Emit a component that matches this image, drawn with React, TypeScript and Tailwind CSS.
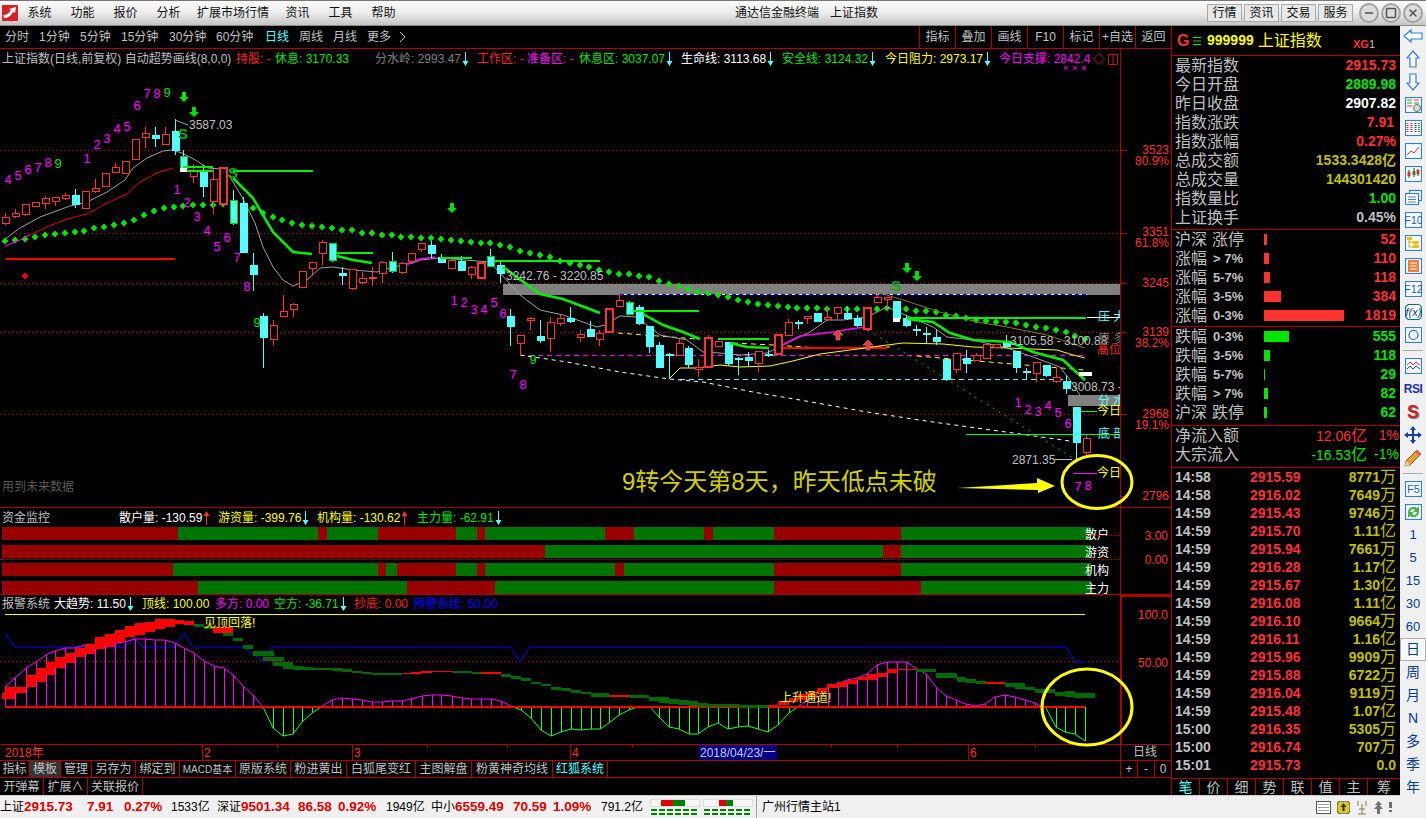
import { Minus, Square, X } from 'lucide-react';
import type { ReactNode } from 'react';

const pts = (a: number[][]) => a.map((p) => p.join(',')).join(' ');

const RED = '#ff3232';
const CYAN = '#54ffff';
const GREEN = '#00e600';
const MAG = '#ff00ff';
const YEL = '#ffff00';

// x, wick top, body top, body bottom, wick bottom, kind
type Candle = [number, number, number, number, number, 'u' | 'd' | 'g'];
const candles: Candle[] = [
    [5, 213, 217, 223, 225, 'u'], [15, 209, 213, 216, 218, 'u'], [25, 204, 204, 214, 216, 'u'], [35, 202, 202, 206, 206, 'u'],
    [45, 196, 198, 203, 209, 'u'], [55, 197, 197, 201, 206, 'u'], [65, 193, 195, 198, 200, 'u'], [75, 189, 195, 204, 208, 'd'],
    [85, 191, 191, 208, 208, 'u'], [95, 179, 188, 191, 193, 'u'], [105, 173, 173, 186, 186, 'u'], [115, 163, 167, 172, 173, 'u'],
    [125, 161, 161, 173, 173, 'u'], [135, 139, 139, 159, 159, 'u'], [145, 127, 133, 137, 148, 'u'], [155, 127, 135, 138, 147, 'd'],
    [165, 127, 134, 144, 145, 'u'], [175, 119, 131, 150, 155, 'd'], [183, 150, 156, 168, 170, 'g'], [193, 164, 170, 176, 183, 'u'],
    [203, 165, 172, 186, 197, 'd'], [213, 169, 179, 201, 214, 'u'], [223, 167, 167, 203, 205, 'u'], [233, 190, 200, 223, 225, 'g'],
    [243, 197, 203, 252, 253, 'd'], [253, 253, 265, 274, 291, 'd'], [263, 313, 316, 337, 368, 'd'], [273, 320, 325, 339, 345, 'u'],
    [283, 295, 311, 316, 316, 'u'], [293, 303, 304, 309, 317, 'u'], [302, 271, 271, 287, 287, 'u'], [312, 262, 262, 268, 276, 'u'],
    [322, 240, 242, 253, 265, 'u'], [332, 243, 243, 260, 262, 'g'], [342, 267, 273, 275, 285, 'd'], [352, 269, 269, 288, 290, 'u'],
    [362, 272, 278, 282, 284, 'u'], [372, 267, 277, 278, 286, 'u'], [382, 261, 262, 273, 283, 'u'], [392, 252, 261, 271, 273, 'g'],
    [402, 262, 263, 272, 274, 'u'], [411, 253, 253, 261, 261, 'u'], [421, 243, 243, 249, 252, 'u'], [431, 241, 245, 253, 258, 'd'],
    [441, 254, 257, 262, 262, 'd'], [451, 258, 260, 268, 268, 'u'], [461, 256, 261, 270, 270, 'd'], [471, 266, 267, 274, 279, 'u'],
    [481, 262, 262, 277, 277, 'u'], [490, 249, 256, 266, 266, 'g'], [500, 262, 265, 273, 283, 'd'], [510, 309, 316, 326, 346, 'd'],
    [520, 335, 335, 343, 356, 'u'], [530, 317, 318, 320, 330, 'u'], [540, 320, 336, 340, 343, 'd'], [550, 317, 322, 338, 352, 'u'],
    [560, 315, 318, 323, 326, 'u'], [570, 307, 318, 321, 323, 'd'], [580, 330, 334, 337, 342, 'u'], [590, 321, 329, 336, 337, 'd'],
    [599, 330, 333, 339, 346, 'u'], [609, 308, 308, 331, 331, 'u'], [619, 294, 300, 306, 306, 'u'], [629, 301, 302, 314, 314, 'g'],
    [639, 305, 307, 323, 325, 'd'], [649, 326, 326, 346, 353, 'd'], [659, 342, 345, 367, 368, 'd'], [669, 353, 354, 355, 379, 'd'],
    [679, 339, 343, 355, 356, 'u'], [688, 346, 348, 364, 368, 'd'], [698, 359, 367, 369, 377, 'u'], [708, 335, 337, 366, 366, 'u'],
    [718, 341, 341, 346, 346, 'u'], [728, 342, 342, 363, 366, 'd'], [738, 357, 358, 359, 375, 'd'], [748, 352, 357, 360, 367, 'd'],
    [758, 351, 351, 363, 372, 'u'], [768, 350, 354, 355, 357, 'd'], [778, 334, 334, 353, 353, 'u'], [788, 319, 322, 335, 335, 'u'],
    [798, 320, 322, 323, 329, 'd'], [807, 316, 316, 318, 324, 'u'], [817, 313, 313, 321, 321, 'd'], [827, 307, 317, 319, 321, 'u'],
    [837, 307, 307, 313, 320, 'u'], [847, 307, 313, 318, 320, 'd'], [857, 315, 318, 325, 327, 'd'], [867, 307, 307, 328, 331, 'u'],
    [877, 292, 297, 302, 302, 'u'], [887, 297, 297, 299, 307, 'u'], [896, 301, 301, 318, 318, 'd'], [906, 315, 318, 325, 327, 'd'],
    [916, 325, 329, 330, 336, 'd'], [926, 327, 333, 334, 343, 'd'], [936, 330, 337, 341, 345, 'd'], [946, 359, 359, 379, 381, 'd'],
    [956, 353, 353, 369, 373, 'u'], [966, 350, 358, 363, 373, 'd'], [976, 353, 355, 360, 361, 'u'], [986, 344, 344, 358, 359, 'u'],
    [996, 344, 344, 347, 347, 'u'], [1006, 335, 341, 346, 346, 'd'], [1016, 351, 351, 367, 373, 'd'], [1026, 368, 371, 372, 380, 'd'],
    [1036, 362, 362, 373, 382, 'u'], [1046, 365, 365, 375, 377, 'd'], [1056, 367, 377, 381, 383, 'u'], [1066, 375, 381, 388, 394, 'd'],
    [1076, 407, 407, 442, 459, 'd'], [1086, 435, 438, 452, 457, 'u'],
];
// the big red bodies are drawn with a heavier outline
const heavyCandles = [223, 481, 609, 708, 778, 867];

const dots = [
    [5, 241], [15, 240], [25, 239], [35, 237], [45, 235], [55, 234], [65, 233], [75, 232], [84, 231], [94, 228], [104, 227], [114, 225],
    [124, 223], [134, 220], [144, 215], [154, 211], [164, 208], [174, 207], [183, 206], [193, 205], [203, 205], [213, 205], [223, 204],
    [253, 208], [263, 213], [273, 217], [282, 220], [292, 223], [302, 225], [312, 226], [322, 227], [332, 228], [342, 230], [352, 230],
    [362, 233], [372, 233], [382, 235], [392, 235], [401, 237], [411, 237], [421, 238], [431, 238], [441, 239], [451, 240], [461, 241],
    [471, 242], [481, 243], [490, 243], [500, 245], [510, 247], [520, 251], [530, 253], [540, 255], [550, 257], [560, 261], [570, 263],
    [580, 265], [589, 267], [599, 270], [609, 272], [619, 274], [629, 274], [639, 276], [649, 277], [659, 281], [669, 284], [679, 286],
    [688, 289], [698, 292], [708, 293], [718, 295], [728, 297], [738, 300], [748, 302], [758, 304], [768, 305], [778, 306], [788, 307],
    [797, 308], [807, 308], [817, 308], [827, 309], [847, 309], [857, 309], [877, 309], [887, 308], [906, 309], [916, 311], [926, 311],
    [936, 312], [946, 315], [956, 316], [966, 318], [976, 320], [986, 321], [996, 322], [1006, 322], [1016, 323], [1026, 325], [1036, 327],
    [1046, 328], [1056, 330], [1066, 332], [1075, 336], [1085, 339],
];

const grayLine = [
    [5, 239], [20, 228], [40, 217], [70, 206], [87, 202], [107, 192], [125, 180], [133, 168], [147, 158], [163, 151], [172, 150], [182, 153],
    [197, 161], [208, 168], [220, 169], [230, 177], [242, 197], [255, 223], [263, 247], [273, 267], [283, 280], [293, 286], [307, 280],
    [320, 268], [333, 267], [353, 270], [377, 272], [393, 267], [413, 263], [420, 260], [440, 258], [490, 262], [500, 273], [520, 295],
    [540, 310], [563, 315], [597, 327], [605, 325], [620, 316], [637, 317], [647, 325], [660, 335], [687, 340], [703, 352], [720, 353],
    [740, 355], [767, 353], [787, 343], [810, 332], [827, 320], [843, 320], [867, 317], [887, 307], [933, 327], [947, 337], [973, 340],
    [1007, 348], [1033, 357], [1060, 367], [1070, 380], [1080, 395],
];
const redLine = [[30, 235], [47, 227], [67, 219], [87, 214], [107, 203], [127, 194], [140, 182], [157, 173], [173, 168]];
const yellowLine = [
    [669, 379], [680, 368], [697, 368], [720, 365], [740, 367], [770, 366], [793, 361], [820, 354], [850, 350], [887, 345], [903, 343],
    [943, 344], [973, 347], [1007, 348], [1057, 350], [1073, 355], [1085, 358],
];
const oliveLine = [[880, 293], [903, 300], [940, 312], [977, 322], [1007, 327], [1047, 335], [1085, 348]];
const trendLine = [
    [520, 355], [567, 362], [620, 372], [669, 379], [703, 382], [753, 392], [800, 400], [867, 412], [933, 422], [1013, 433], [1077, 442],
];
const greenThick = [
    [[233, 178], [253, 198], [273, 232], [293, 252], [312, 254]],
    [[337, 256], [353, 260], [372, 263]],
    [[503, 267], [540, 294], [563, 299], [587, 308], [600, 313]],
    [[643, 314], [663, 325], [683, 332], [700, 339]],
    [[730, 343], [747, 347], [769, 348]],
    [[907, 319], [933, 322], [950, 333], [973, 340], [1010, 342], [1033, 352], [1063, 360], [1085, 380]],
];
const greenFlat = [
    [183, 213, 167], [183, 213, 171], [233, 313, 171], [337, 373, 253], [440, 472, 258], [495, 600, 261],
    [633, 699, 311], [718, 769, 339], [907, 1086, 318],
];

// x, y, text, colour
const nines: [number, number, string, string][] = [
    [8, 179, '4', MAG], [18, 175, '5', MAG], [28, 169, '6', MAG], [38, 167, '7', MAG], [48, 162, '8', MAG], [58, 163, '9', GREEN],
    [87, 158, '1', MAG], [97, 144, '2', MAG], [107, 138, '3', MAG], [117, 128, '4', MAG], [127, 126, '5', MAG], [137, 105, '6', MAG],
    [147, 93, '7', MAG], [157, 93, '8', MAG], [167, 92, '9', GREEN], [177, 189, '1', MAG], [187, 202, '2', MAG], [197, 216, '3', MAG],
    [207, 230, '4', MAG], [217, 246, '5', MAG], [227, 237, '6', MAG], [237, 257, '7', MAG], [247, 286, '8', MAG], [257, 322, '9', GREEN],
    [454, 300, '1', MAG], [464, 302, '2', MAG], [474, 309, '3', MAG], [484, 309, '4', MAG], [494, 302, '5', MAG], [503, 313, '6', MAG],
    [513, 374, '7', MAG], [523, 384, '8', MAG], [533, 359, '9', GREEN], [1018, 402, '1', MAG], [1028, 409, '2', MAG], [1038, 411, '3', MAG],
    [1048, 405, '4', MAG], [1058, 412, '5', MAG], [1068, 423, '6', MAG], [1078, 486, '7', MAG], [1088, 485, '8', MAG],
];

const downArrows = [[184, 97], [194, 112], [452, 208], [907, 268], [917, 276]];
const upArrows = [[838, 335], [868, 345]];

const moneyBars: [number, string][][] = [
    [[178, 'r'], [318, 'g'], [327, 'r'], [378, 'g'], [456, 'r'], [477, 'g'], [485, 'r'], [605, 'g'], [634, 'r'], [704, 'g'], [713, 'r'], [774, 'g'], [901, 'r'], [1091, 'g']],
    [[545, 'r'], [883, 'g'], [901, 'r'], [1091, 'g']],
    [[173, 'r'], [378, 'g'], [386, 'r'], [397, 'g'], [456, 'r'], [477, 'g'], [485, 'r'], [615, 'g'], [624, 'r'], [774, 'g'], [901, 'r'], [1091, 'g']],
    [[198, 'r'], [407, 'g'], [495, 'r'], [774, 'g'], [921, 'r'], [1091, 'g']],
];
const moneyLabels = ['散户', '游资', '机构', '主力'];

// x1, x2, y1, y2, colour key
const band: [number, number, number, number, string][] = [
    [2, 15, 693, 699, 'r'], [5, 15, 687, 699, 'r'], [15, 26, 687, 693, 'r'], [26, 36, 675, 687, 'r'], [36, 46, 668, 682, 'r'], [46, 55, 662, 675, 'r'],
    [55, 65, 657, 668, 'r'], [65, 75, 653, 663, 'r'], [75, 85, 648, 657, 'r'], [85, 95, 644, 654, 'r'], [95, 105, 637, 649, 'r'], [105, 115, 634, 647, 'r'],
    [115, 125, 630, 642, 'r'], [125, 135, 626, 637, 'r'], [135, 145, 623, 635, 'r'], [145, 155, 622, 632, 'r'], [155, 165, 619, 629, 'r'], [165, 175, 619, 627, 'r'],
    [175, 184, 620, 624, 'r'], [184, 194, 621, 625, 'r'], [194, 204, 624, 627, 'g'], [204, 214, 626, 629, 'g'], [213, 233, 627, 633, 'r'], [223, 233, 633, 636, 'g'],
    [233, 243, 638, 641, 'g'], [243, 253, 645, 649, 'g'], [253, 274, 651, 656, 'g'], [263, 284, 657, 661, 'g'], [273, 293, 662, 666, 'g'], [283, 303, 666, 669, 'g'],
    [293, 313, 667, 670, 'g'], [313, 332, 668, 670, 'g'], [332, 342, 668, 671, 'g'], [342, 352, 669, 672, 'g'], [352, 362, 671, 673, 'g'], [362, 372, 672, 674, 'g'],
    [372, 382, 673, 675, 'g'], [382, 402, 673, 675, 'g'], [402, 411, 673, 674, 'r'], [411, 421, 672, 674, 'r'], [421, 432, 671, 673, 'r'], [432, 452, 671, 672, 'r'],
    [452, 472, 671, 673, 'g'], [472, 481, 672, 674, 'g'], [481, 501, 672, 674, 'r'], [501, 511, 674, 677, 'g'], [511, 521, 676, 679, 'g'], [521, 531, 678, 681, 'g'],
    [531, 541, 682, 684, 'g'], [541, 551, 684, 686, 'g'], [551, 561, 687, 690, 'g'], [561, 571, 688, 691, 'g'], [571, 581, 690, 693, 'g'], [581, 591, 692, 694, 'g'],
    [591, 609, 693, 697, 'g'], [609, 630, 695, 697, 'r'], [630, 649, 695, 698, 'g'], [649, 659, 697, 701, 'g'], [659, 669, 697, 703, 'g'], [669, 679, 699, 704, 'g'],
    [679, 689, 700, 705, 'g'], [689, 698, 701, 706, 'g'], [698, 708, 703, 707, 'g'], [708, 739, 704, 707, 'g'], [739, 768, 705, 708, 'g'], [768, 778, 705, 707, 'r'],
    [778, 789, 701, 705, 'r'], [789, 798, 698, 702, 'r'], [798, 807, 694, 700, 'r'], [807, 817, 692, 697, 'r'], [817, 827, 688, 692, 'r'], [827, 837, 684, 688, 'r'],
    [837, 847, 682, 687, 'r'], [847, 857, 680, 684, 'r'], [857, 867, 677, 680, 'r'], [867, 877, 674, 680, 'r'], [877, 887, 673, 677, 'r'], [887, 898, 669, 673, 'r'],
    [898, 916, 669, 670, 'r'], [916, 936, 669, 672, 'g'], [936, 957, 673, 678, 'g'], [957, 966, 677, 682, 'g'], [966, 976, 679, 683, 'g'], [976, 986, 681, 684, 'g'],
    [986, 1005, 682, 684, 'r'], [1005, 1015, 683, 687, 'g'], [1015, 1025, 683, 689, 'g'], [1025, 1035, 687, 690, 'g'], [1035, 1055, 689, 693, 'g'], [1055, 1065, 692, 696, 'g'],
    [1065, 1075, 691, 697, 'g'], [1075, 1095, 693, 698, 'g'],
];

const magUp = [
    [[5, 687], [15, 678], [26, 668], [36, 662], [46, 655], [55, 651], [65, 648], [75, 648], [85, 645], [95, 644], [105, 644], [115, 643], [125, 642], [135, 639], [145, 639], [155, 640], [165, 640], [175, 643], [184, 648], [194, 653], [204, 661], [214, 666], [224, 668], [233, 675], [243, 686], [253, 695], [263, 707]],
    [[321, 707], [332, 700], [342, 698], [352, 699], [362, 700], [372, 702], [382, 702], [392, 701], [402, 701], [411, 699], [422, 696], [432, 695], [441, 695], [452, 696], [462, 698], [471, 699], [481, 699], [491, 699], [501, 701], [511, 706]],
    [[798, 707], [807, 700], [818, 697], [828, 688], [838, 684], [847, 680], [857, 678], [867, 674], [877, 665], [887, 662], [897, 662], [906, 662], [916, 668], [926, 674], [936, 687], [946, 696], [956, 700], [966, 704], [976, 706], [985, 704], [995, 697], [1005, 695], [1015, 697], [1025, 700], [1035, 703], [1042, 707]],
];
const greenDown = [
    [[263, 707], [273, 728], [283, 736], [293, 734], [302, 722], [312, 713], [321, 707]],
    [[513, 707], [521, 710], [531, 718], [541, 730], [551, 736], [561, 732], [571, 729], [581, 730], [591, 729], [600, 729], [609, 723], [619, 715], [629, 710], [637, 707]],
    [[650, 707], [659, 717], [669, 727], [679, 729], [689, 734], [698, 734], [708, 727], [718, 723], [728, 729], [738, 727], [748, 726], [758, 729], [768, 732], [778, 725], [789, 713], [798, 707]],
    [[1046, 708], [1056, 727], [1065, 732], [1075, 734], [1085, 741]],
];
const blueLine = [
    [5, 633], [15, 647], [124, 647], [134, 638], [143, 647], [174, 647], [184, 633], [193, 647], [243, 647], [264, 662], [272, 647], [511, 647],
    [520, 662], [530, 647], [1066, 647], [1075, 662], [1085, 662],
];

const periods: [string, string][] = [
    ['分时', 'w-[34px]'], ['1分钟', 'w-[41px]'], ['5分钟', 'w-[41px]'], ['15分钟', 'w-[48px]'], ['30分钟', 'w-[47px]'],
    ['60分钟', 'w-[49px]'], ['日线', 'w-[34px] text-[#54ffff]'], ['周线', 'w-[34px]'], ['月线', 'w-[34px]'], ['更多', 'w-[32px]'],
];
const menu: [string, string][] = [
    ['系统', 'px-[9.5px]'], ['功能', 'px-[9.5px]'], ['报价', 'px-[9.5px]'], ['分析', 'px-[9.5px]'], ['扩展市场行情', 'px-[7px]'],
    ['资讯', 'px-[9.5px]'], ['工具', 'px-[9.5px]'], ['帮助', 'px-[9.5px]'],
];
const chartButtons = ['指标', '叠加', '画线', 'F10', '标记', '+自选', '返回'];

const quote: [string, string, string][] = [
    ['最新指数', '2915.73', 'text-[#ff3232]'], ['今日开盘', '2889.98', 'text-[#00e600]'], ['昨日收盘', '2907.82', 'text-white'],
    ['指数涨跌', '7.91', 'text-[#ff3232] pr-[2px]'], ['指数涨幅', '0.27%', 'text-[#ff3232]'], ['总成交额', '1533.3428亿', 'text-[#c0c000]'],
    ['总成交量', '144301420', 'text-[#c0c000]'], ['指数量比', '1.00', 'text-[#00e600]'], ['上证换手', '0.45%', 'text-[#c0c0c0]'],
];
const upRows: [string, string, string, string][] = [
    ['沪深', '涨停', 'w-[3px]', '52'], ['涨幅', '> 7%', 'w-[5px]', '110'], ['涨幅', '5-7%', 'w-[6px]', '118'], ['涨幅', '3-5%', 'w-[17px]', '384'], ['涨幅', '0-3%', 'w-[80px]', '1819'],
];
const downRows: [string, string, string, string][] = [
    ['跌幅', '0-3%', 'w-[25px]', '555'], ['跌幅', '3-5%', 'w-[6px]', '118'], ['跌幅', '5-7%', 'w-[1px]', '29'], ['跌幅', '> 7%', 'w-[4px]', '82'], ['沪深', '跌停', 'w-[3px]', '62'],
];
const ticks: [string, string, string, string][] = [
    ['14:58', '2915.59', '8771', '万'], ['14:58', '2916.02', '7649', '万'], ['14:59', '2915.43', '9746', '万'], ['14:59', '2915.70', '1.11', '亿'],
    ['14:59', '2915.94', '7661', '万'], ['14:59', '2916.28', '1.17', '亿'], ['14:59', '2915.67', '1.30', '亿'], ['14:59', '2916.08', '1.11', '亿'],
    ['14:59', '2916.10', '9664', '万'], ['14:59', '2916.11', '1.16', '亿'], ['14:59', '2915.96', '9909', '万'], ['14:59', '2915.88', '6722', '万'],
    ['14:59', '2916.04', '9119', '万'], ['14:59', '2915.48', '1.07', '亿'], ['15:00', '2916.35', '5305', '万'], ['15:00', '2916.74', '707', '万'],
    ['15:01', '2915.73', '0.0', ''],
];

const tabsOne: [string, string][] = [
    ['指标', 'w-[30px]'], ['模板', 'w-[31px] bg-[#333333]'], ['管理', 'w-[31px]'], ['另存为', 'w-[44px]'], ['绑定到', 'w-[44px]'], ['MACD基本', 'w-[56px] text-[10px]'],
    ['原版系统', 'w-[55px]'], ['粉进黄出', 'w-[56px]'], ['白狐尾变红', 'w-[69px]'], ['主图解盘', 'w-[56px]'], ['粉黄神奇均线', 'w-[81px]'], ['红狐系统', 'w-[55px] text-[#54ffff]'],
];
const tabsTwo: [string, string][] = [['开弹幕', 'w-[44px]'], ['扩展∧', 'w-[44px]'], ['关联报价', 'w-[55px]']];

const statusItems: [string, string][] = [
    ['上证', 'w-[24px] text-black'], ['2915.73', 'w-[63px] text-[#e00000] font-bold text-[13.5px]'], ['7.91', 'w-[37px] text-[#e00000] font-bold text-[13.5px]'],
    ['0.27%', 'w-[47px] text-[#e00000] font-bold text-[13.5px]'], ['1533亿', 'w-[46px] text-black'], ['深证', 'w-[24px] text-black'],
    ['9501.34', 'w-[57px] text-[#e00000] font-bold text-[13.5px]'], ['86.58', 'w-[40px] text-[#e00000] font-bold text-[13.5px]'], ['0.92%', 'w-[48px] text-[#e00000] font-bold text-[13.5px]'],
    ['1949亿', 'w-[45px] text-black'], ['中小', 'w-[24px] text-black'], ['6559.49', 'w-[58px] text-[#e00000] font-bold text-[13.5px]'],
    ['70.59', 'w-[40px] text-[#e00000] font-bold text-[13.5px]'], ['1.09%', 'w-[48px] text-[#e00000] font-bold text-[13.5px]'], ['791.2亿', 'w-[49px] text-black'],
];

function Arrow({ up, color }: { up?: boolean; color: string }) {
    return (
        <svg width="7" height="14" viewBox="0 0 7 14" className="shrink-0 ml-[1px]">
            {up ? (
                <path d="M3.5 0 L6.5 5 L4 5 L4 14 L3 14 L3 5 L.5 5 Z" fill={color} />
            ) : (
                <path d="M3.5 14 L6.5 9 L4 9 L4 0 L3 0 L3 9 L.5 9 Z" fill={color} />
            )}
        </svg>
    );
}

function Logo() {
    return (
        <svg width="16" height="16" viewBox="0 0 16 16" className="shrink-0">
            <rect width="16" height="16" rx="1" fill="#d92020" />
            <path d="M1 10 C5 10 7 8 9 5 L7 4 L14 2 L13 8 L11 7 C9 11 6 13 2 13 Z" fill="#fff" />
        </svg>
    );
}

function TitleBar() {
    return (
        <div className="h-[26px] shrink-0 flex items-center bg-gradient-to-b from-[#fafafa] via-[#ececec] to-[#c4c4c4] border-t border-[#777777] border-b border-b-[#8a8a8a] text-[12px] text-[#111111]">
            <div className="pl-[2px] w-[18px]"><Logo /></div>
            {menu.map(([m, cls]) => (
                <span key={m} className={cls}>{m}</span>
            ))}
            <span className="absolute left-[735px]">通达信金融终端</span>
            <span className="absolute left-[830px]">上证指数</span>
            <div className="ml-auto flex items-center gap-[2px] pr-[3px]">
                {['行情', '资讯', '交易', '服务'].map((m) => (
                    <span key={m} className="w-[35px] h-[18px] flex items-center justify-center border border-[#a8a8a8] bg-[#e8e8e8]">{m}</span>
                ))}
                <div className="ml-[4px] flex gap-[2px]">
                    {[Minus, Square, X].map((Icon, i) => (
                        <span key={i} className="w-[20px] h-[20px] rounded-full border-2 border-[#a0a0a0] bg-[#dcdcdc] flex items-center justify-center">
                            <Icon size={12} strokeWidth={3} color="#505050" />
                        </span>
                    ))}
                </div>
            </div>
        </div>
    );
}

function PeriodRow() {
    return (
        <div className="h-[23px] shrink-0 flex items-center border-b border-[#b00000] text-[12px] text-[#c0c0c0]">
            <div className="flex items-center pl-[5px]">
                {periods.map(([p, cls]) => (
                    <span key={p} className={cls}>{p}</span>
                ))}
                <svg width="7" height="10" viewBox="0 0 7 10"><path d="M1 0 L6 5 L1 10" fill="none" stroke="#c0c0c0" /></svg>
            </div>
            <div className="ml-auto flex h-full">
                {chartButtons.map((b) => (
                    <span key={b} className="w-[36px] flex items-center justify-center border-l border-[#b00000]">{b}</span>
                ))}
            </div>
        </div>
    );
}

function Legend() {
    return (
        <div className="absolute top-0 left-0 h-[20px] flex items-center text-[12px] pl-[2px]">
            <span className="w-[234px] text-[#c0c0c0]">上证指数(日线,前复权) 自动超势画线(8,0,0)</span>
            <span className="w-[39px] text-[#ff2020]">持股: -</span>
            <span className="w-[100px] text-[#00e600]">休息: 3170.33</span>
            <span className="w-[102px] flex items-center text-[#808080]">分水岭: 2993.47<Arrow color={CYAN} /></span>
            <span className="w-[50px] text-[#ff2020]">工作区: -</span>
            <span className="w-[52px] text-[#ff00ff]">准备区: -</span>
            <span className="w-[102px] flex items-center text-[#00e600]">休息区: 3037.07<Arrow color={CYAN} /></span>
            <span className="w-[101px] flex items-center text-white">生命线: 3113.68<Arrow color={CYAN} /></span>
            <span className="w-[103px] flex items-center text-[#00e600]">安全线: 3124.32<Arrow color={CYAN} /></span>
            <span className="w-[114px] flex items-center text-[#ffff00]">今日阻力: 2973.17<Arrow color={CYAN} /></span>
            <span className="w-[94px] text-[#ff00ff]">今日支撑: 2842.4</span>
            <svg width="30" height="14" viewBox="0 0 30 14">
                <path d="M6 1.5 L11.5 7 L6 12.5 L.5 7 Z" fill="none" stroke="#b02020" />
                <path d="M15.5 2.5 H24.5 V12.5 H15.5 Z M20 2.5 V12.5" fill="none" stroke="#b02020" />
            </svg>
        </div>
    );
}

function CandleMark({ c }: { c: Candle }) {
    const [x, wt, bt, bb, wb, kind] = c;
    const hollow = kind === 'u';
    const color = hollow ? RED : CYAN;
    const h = Math.max(bb - bt, 1);
    const heavy = heavyCandles.includes(x);
    return (
        <g shapeRendering="crispEdges">
            <line x1={x + 0.5} x2={x + 0.5} y1={wt} y2={wb} stroke={color} />
            <rect
                x={x - 3}
                y={bt + 0.5}
                width={7}
                height={h}
                fill={hollow ? '#000' : CYAN}
                stroke={kind === 'g' ? '#00d000' : color}
                strokeWidth={heavy ? 2 : 1}
            />
        </g>
    );
}

function MainChart() {
    return (
        <svg width="1120" height="458" viewBox="0 49 1120 458" className="overflow-hidden">
            {[150, 233, 283, 332, 414].map((y) => (
                <line key={y} x1="0" x2="1120" y1={y + 0.5} y2={y + 0.5} stroke="#c00000" strokeDasharray="1 3" shapeRendering="crispEdges" />
            ))}
            <rect x="503" y="284" width="617" height="11" fill="#808080" />
            <rect x="1068" y="395" width="52" height="11" fill="#808080" />

            <line x1="620" x2="1087" y1="294.5" y2="294.5" stroke="#0000ff" strokeDasharray="4 3" />
            <line x1="624" x2="1087" y1="294.5" y2="294.5" stroke="#ffffff" strokeDasharray="3 4" />
            <line x1="520" x2="1085" y1="355.5" y2="355.5" stroke={MAG} strokeDasharray="5 4" />
            <line x1="680" x2="1066" y1="379.5" y2="379.5" stroke={CYAN} strokeDasharray="5 4" />
            <polyline points={pts([[618, 333], [697, 339]])} fill="none" stroke={YEL} strokeDasharray="5 4" />
            <polyline points={pts([[733, 343], [773, 345], [820, 348], [890, 347]])} fill="none" stroke={YEL} strokeDasharray="5 4" />
            <polyline points={pts([[917, 356], [1085, 370]])} fill="none" stroke={YEL} strokeDasharray="5 4" />
            <polyline points={pts(trendLine)} fill="none" stroke="#ffffff" strokeDasharray="4 4" />
            <polyline points={pts([[868, 330], [1073, 458]])} fill="none" stroke="#00c000" strokeDasharray="2 5" />
            <line x1="966" x2="1120" y1="434.5" y2="434.5" stroke="#00ff00" />
            <line x1="1078" x2="1097" y1="411.5" y2="411.5" stroke="#00ff00" />
            <line x1="1073" x2="1097" y1="473.5" y2="473.5" stroke={MAG} />
            <line x1="1087" x2="1120" y1="317.5" y2="317.5" stroke="#ffffff" />

            <rect x="6" y="258" width="169" height="2" fill="#ff0000" />
            <rect x="782" y="347" width="105" height="2" fill="#ff0000" />
            <path d="M25 272.5 L28.5 276 L25 279.5 L21.5 276 Z" fill="#ff0000" />

            {dots.map(([x, y]) => (
                <path key={`${x}-${y}`} d={`M${x} ${y - 3.4} L${x + 3.4} ${y} L${x} ${y + 3.4} L${x - 3.4} ${y} Z`} fill="#00e600" />
            ))}

            <polyline points={pts(grayLine)} fill="none" stroke="#a0a0a0" />
            <polyline points={pts(redLine)} fill="none" stroke="#e00000" />
            <polyline points={pts([[5, 246], [20, 240], [30, 235]])} fill="none" stroke={MAG} />
            <polyline points={pts([[405, 265], [420, 259], [435, 257]])} fill="none" stroke={MAG} strokeWidth="1.5" />
            <polyline points={pts([[782, 345], [800, 336], [833, 332], [857, 328], [867, 327]])} fill="none" stroke={MAG} strokeWidth="1.5" />
            <polyline points={pts(yellowLine)} fill="none" stroke={YEL} />
            <polyline points={pts(oliveLine)} fill="none" stroke="#8a7a10" />

            {candles.map((c) => (
                <CandleMark key={c[0]} c={c} />
            ))}

            {greenThick.map((l, i) => (
                <polyline key={i} points={pts(l)} fill="none" stroke="#00f000" strokeWidth="2.5" />
            ))}
            {greenFlat.map(([a, b, y]) => (
                <rect key={`${a}-${y}`} x={a} y={y - 1} width={b - a} height="2" fill="#00f000" />
            ))}
            <rect x="1079" y="372" width="13" height="4" fill="#ffffff" />
            <rect x="180" y="168" width="7" height="4" fill="#ffffff" />
            <rect x="893" y="318" width="7" height="4" fill="#ffffff" />

            {downArrows.map(([x, y]) => (
                <path key={`${x}-${y}`} d={`M${x - 2} ${y - 5} H${x + 2} V${y} H${x + 5} L${x} ${y + 5} L${x - 5} ${y} H${x - 2} Z`} fill="#00e000" />
            ))}
            {upArrows.map(([x, y]) => (
                <path key={`${x}-${y}`} d={`M${x - 2} ${y + 5} H${x + 2} V${y} H${x + 5} L${x} ${y - 5} L${x - 5} ${y} H${x - 2} Z`} fill="#ff3232" stroke="#909090" strokeWidth="0.7" />
            ))}

            <g fontSize="13" textAnchor="middle" dominantBaseline="central">
                {nines.map(([x, y, t, color]) => (
                    <text key={`${x}-${y}`} x={x} y={y} fill={color}>{t}</text>
                ))}
            </g>
            <g fontSize="15" fontWeight="bold" fill="#00b000" textAnchor="middle" dominantBaseline="central">
                <text x="183" y="133">S</text>
                <text x="233" y="172">S</text>
                <text x="896" y="285">S</text>
            </g>

            <g fontSize="12" fill="#c0c0c0" dominantBaseline="central">
                <polyline points="175,120 180,122 188,125" fill="none" stroke="#a0a0a0" />
                <text x="189" y="125">3587.03</text>
                <text x="506" y="276">3242.76 - 3220.85</text>
                <text x="1010" y="341">3105.58 - 3100.88</text>
                <text x="1071" y="387">3008.73 -</text>
                <text x="1012" y="460">2871.35</text>
                <line x1="1055" x2="1072" y1="459.5" y2="459.5" stroke="#c0c0c0" />
                <text x="2" y="487" fill="#5a5a5a">用到未来数据</text>
            </g>

            <g fontSize="12" dominantBaseline="central">
                <text x="1098" y="317" fill={CYAN}>压 大</text>
                <text x="1098" y="339" fill="#808080">原 多</text>
                <text x="1097" y="350" fill="#ff2020">高位</text>
                <text x="1098" y="401" fill={CYAN}>分 水</text>
                <text x="1097" y="411" fill={YEL}>今日</text>
                <text x="1098" y="434" fill={CYAN}>底 部</text>
                <text x="1097" y="473" fill={YEL}>今日</text>
            </g>

            <text x="622" y="481" fontSize="24" fill="#d0d000" dominantBaseline="central">9转今天第8天，昨天低点未破</text>
            <path d="M957 488 L1037 483 L1037 478 L1055 486 L1038 493 L1038 490 Z" fill={YEL} />
        </svg>
    );
}

function PriceAxis() {
    const labels: [number, string][] = [
        [150, '3523'], [161, '80.9%'], [232, '3351'], [243, '61.8%'], [283, '3245'], [332, '3139'], [343, '38.2%'], [414, '2968'], [425, '19.1%'], [496, '2796'],
    ];
    return (
        <svg width="50" height="458" viewBox="0 49 50 458">
            {[150, 233, 283, 332, 414, 496].map((y) => (
                <line key={y} x1="0" x2="6" y1={y + 0.5} y2={y + 0.5} stroke="#c00000" />
            ))}
            <g fontSize="12" fill={RED} textAnchor="end" dominantBaseline="central">
                {labels.map(([y, t]) => (
                    <text key={y} x="48" y={y}>{t}</text>
                ))}
            </g>
        </svg>
    );
}

function MoneyPane() {
    return (
        <div className="h-[87px] shrink-0 flex border-t border-[#b00000]">
            <div className="relative w-[1120px] flex flex-col">
                <div className="h-[19px] flex items-center text-[12px] pl-[2px]">
                    <span className="w-[117px] text-[#c0c0c0]">资金监控</span>
                    <span className="w-[99px] flex items-center text-white">散户量: -130.59<Arrow up color={RED} /></span>
                    <span className="w-[99px] flex items-center text-[#ffff00]">游资量: -399.76<Arrow color={CYAN} /></span>
                    <span className="w-[100px] flex items-center text-[#ffff00]">机构量: -130.62<Arrow up color={RED} /></span>
                    <span className="flex items-center text-[#00e600]">主力量: -62.91<Arrow color={CYAN} /></span>
                </div>
                <div className="flex flex-col gap-[5px] pl-[2px]">
                    {moneyBars.map((bar, i) => (
                        <div key={i} className="relative h-[13px] flex">
                            {bar.map(([stop, c], j) => (
                                <div
                                    key={j}
                                    className={c === 'r' ? 'h-full bg-[#980000]' : 'h-full bg-[#007400]'}
                                    style={{ width: stop - (j ? bar[j - 1][0] : 2) }}
                                />
                            ))}
                            <span className="absolute left-[1083px] -top-[1px] text-[12px] text-white">{moneyLabels[i]}</span>
                        </div>
                    ))}
                </div>
                <div className="absolute top-[51px] inset-x-0 border-t border-dotted border-[#c00000]" />
                <div className="absolute top-[27px] left-[1086px] right-0 border-t border-dotted border-[#c00000]" />
            </div>
            <div className="relative flex-1 border-l border-[#b00000] text-[12px] text-[#ff3232]">
                <span className="absolute right-[3px] top-[19px]">3.00</span>
                <span className="absolute right-[3px] top-[43px]">0.00</span>
            </div>
        </div>
    );
}

function AlertChart() {
    return (
        <svg width="1120" height="149" viewBox="0 595 1120 149">
            <line x1="5" x2="1085" y1="614.5" y2="614.5" stroke={YEL} />
            <line x1="0" x2="1120" y1="661.5" y2="661.5" stroke="#c00000" strokeDasharray="1 3" shapeRendering="crispEdges" />
            <polyline points={pts(blueLine)} fill="none" stroke="#0000ff" />
            {magUp.map((l, i) => (
                <g key={i}>
                    {l.map(([x, y]) => (
                        <line key={x} x1={x + 0.5} x2={x + 0.5} y1={y} y2="707" stroke={MAG} shapeRendering="crispEdges" />
                    ))}
                    <polyline points={pts(l)} fill="none" stroke={MAG} />
                </g>
            ))}
            {greenDown.map((l, i) => (
                <g key={i}>
                    {l.map(([x, y]) => (
                        <line key={x} x1={x + 0.5} x2={x + 0.5} y1="707" y2={y} stroke="#22ff22" shapeRendering="crispEdges" />
                    ))}
                    <polyline points={pts(l)} fill="none" stroke="#22ff22" />
                </g>
            ))}
            <rect x="5" y="706" width="1080" height="2" fill="#ff0000" />
            {band.map(([a, b, y1, y2, c]) => (
                <rect key={`${a}-${y1}`} x={a} y={y1} width={b - a} height={y2 - y1} fill={c === 'r' ? '#ff0000' : '#006a00'} />
            ))}
            <g fontSize="12" fill={YEL} dominantBaseline="central">
                <text x="204" y="623">见顶回落!</text>
                <text x="780" y="698">上升通道!</text>
            </g>
        </svg>
    );
}

function AlertPane() {
    return (
        <div className="h-[150px] shrink-0 flex border-t border-[#b00000]">
            <div className="relative w-[1120px]">
                <AlertChart />
                <div className="absolute top-0 left-0 h-[17px] flex items-center text-[12px] pl-[2px]">
                    <span className="w-[52px] text-[#c0c0c0]">报警系统</span>
                    <span className="w-[88px] flex items-center text-white">大趋势: 11.50<Arrow color={CYAN} /></span>
                    <span className="w-[73px] text-[#ffff00]">顶线: 100.00</span>
                    <span className="w-[59px] text-[#ff00ff]">多方: 0.00</span>
                    <span className="w-[80px] flex items-center text-[#00e600]">空方: -36.71<Arrow color={CYAN} /></span>
                    <span className="w-[59px] text-[#ff2020]">抄底: 0.00</span>
                    <span className="text-[#0000ff]">预警系统: 50.00</span>
                </div>
            </div>
            <div className="relative flex-1 border-l-2 border-t-2 border-[#b00000] text-[12px] text-[#ff3232]">
                <span className="absolute right-[3px] top-[9px]">100.0</span>
                <span className="absolute right-[3px] top-[57px]">50.00</span>
            </div>
        </div>
    );
}

function DateAxis() {
    return (
        <div className="h-[16px] shrink-0 flex border-t border-[#b00000] text-[12px]">
            <svg width="1120" height="15" viewBox="0 0 1120 15">
                {[202, 352, 570, 968].map((x) => (
                    <line key={x} x1={x + 0.5} x2={x + 0.5} y1="0" y2="15" stroke="#b00000" />
                ))}
                {[277, 427, 507, 632, 831, 897, 1035].map((x) => (
                    <line key={x} x1={x + 0.5} x2={x + 0.5} y1="0" y2="3" stroke="#b00000" />
                ))}
                <g fontSize="12" fill={RED} dominantBaseline="central">
                    <text x="5" y="8">2018年</text>
                    <text x="204" y="8">2</text>
                    <text x="354" y="8">3</text>
                    <text x="572" y="8">4</text>
                    <text x="970" y="8">6</text>
                </g>
                <rect x="699" y="0" width="78" height="15" fill="#000080" />
                <text x="700" y="8" fontSize="12" fill="#c8c8ff" dominantBaseline="central">2018/04/23/一</text>
            </svg>
            <span className="flex-1 border-l border-[#b00000] pl-[12px] text-[#c0c0c0] leading-[15px]">日线</span>
        </div>
    );
}

function TabRow({ items, h }: { items: [string, string][]; h: string }) {
    return (
        <div className={`${h} shrink-0 flex border-t border-[#b00000] text-[12px] text-[#c0c0c0]`}>
            {items.map(([t, cls]) => (
                <span key={t} className={`${cls} flex items-center justify-center border-r border-[#b00000]`}>{t}</span>
            ))}
            {h === 'h-[17px]' && (
                <div className="ml-auto w-[51px] flex border-l border-[#b00000]">
                    {['+', '-', '0'].map((b) => (
                        <span key={b} className="flex-1 flex items-center justify-center border-r border-[#b00000] last:border-r-0">{b}</span>
                    ))}
                </div>
            )}
        </div>
    );
}

function BreadthRow({ row, up }: { row: [string, string, string, string]; up: boolean }) {
    const [a, b, w, n] = row;
    const cjk = b.charCodeAt(0) > 255;
    return (
        <div className="h-[19px] flex items-center">
            <span className="w-[92px] flex items-center pl-[3px] text-[#c0c0c0]">
                <span className="text-[16px] leading-[19px]">{a}</span>
                <span className={cjk ? 'ml-[5px] text-[16px] leading-[19px]' : 'ml-[6px] text-[13px] font-bold'}>{b}</span>
            </span>
            <span className="flex-1 flex items-center">
                <span className={`${w} h-[11px] ${up ? 'bg-[#ff3232]' : 'bg-[#00e600]'}`} />
            </span>
            <span className={`pr-[4px] text-[14px] font-bold ${up ? 'text-[#ff3232]' : 'text-[#00e600]'}`}>{n}</span>
        </div>
    );
}

function InfoPanel() {
    const tabs = ['笔', '价', '细', '势', '联', '值', '主', '筹'];
    return (
        <div className="w-[229px] shrink-0 flex flex-col border-l border-[#b00000]">
            <div className="h-[30px] shrink-0 relative flex items-center border-b border-[#b00000] pl-[5px]">
                <span className="w-[16px] text-[16px] font-bold text-[#ff3232]">G</span>
                <svg width="9" height="10" viewBox="0 0 9 10" className="mr-[5px]"><path d="M0 1.5 H8 M0 5 H8 M0 8.5 H8" stroke="#00e600" /></svg>
                <span className="text-[14px] font-bold text-[#ffff00]">999999</span>
                <span className="ml-[4px] text-[16px] text-[#ffff00]">上证指数</span>
                <span className="absolute left-[181px] top-[10px] text-[11px] font-bold text-[#ff3232]">XG<span className="font-normal text-[#c0c0c0]">1</span></span>
            </div>
            <div className="h-[174px] shrink-0 border-b border-[#b00000]">
                {quote.map(([l, v, c]) => (
                    <div key={l} className="h-[19px] flex items-center justify-between pl-[3px] pr-[4px]">
                        <span className="text-[16px] text-[#c0c0c0] leading-[19px]">{l}</span>
                        <span className={`text-[14px] font-bold ${c}`}>{v}</span>
                    </div>
                ))}
            </div>
            <div className="h-[97px] shrink-0 border-b border-[#b00000]">
                {upRows.map((r) => <BreadthRow key={r[1]} row={r} up />)}
            </div>
            <div className="h-[99px] shrink-0 border-b border-[#b00000]">
                {downRows.map((r) => <BreadthRow key={r[1]} row={r} up={false} />)}
            </div>
            <div className="h-[42px] shrink-0 border-b border-[#b00000]">
                <div className="h-[19px] flex items-center pl-[3px] pr-[1px] text-[14px]">
                    <span className="flex-1 text-[16px] text-[#c0c0c0] leading-[19px]">净流入额</span>
                    <span className="text-[#ff3232] w-[70px] text-right">12.06<span className="text-[16px]">亿</span></span>
                    <span className="text-[#ff3232] w-[32px] text-right">1%</span>
                </div>
                <div className="h-[19px] flex items-center pl-[3px] pr-[1px] text-[14px]">
                    <span className="flex-1 text-[16px] text-[#c0c0c0] leading-[19px]">大宗流入</span>
                    <span className="text-[#00e600] w-[70px] text-right">-16.53<span className="text-[16px]">亿</span></span>
                    <span className="text-[#00e600] w-[32px] text-right">-1%</span>
                </div>
            </div>
            <div className="flex-1 min-h-0 font-bold text-[14px]">
                {ticks.map(([t, p, v, u], i) => (
                    <div key={i} className="h-[18px] flex items-center pl-[3px] pr-[4px]">
                        <span className="w-[75px] text-[#c0c0c0]">{t}</span>
                        <span className="w-[60px] text-[#ff3232]">{p}</span>
                        <span className="flex-1 text-right text-[#c0c000]">
                            {v}<span className="font-normal text-[16px] leading-[18px]">{u}</span>
                        </span>
                    </div>
                ))}
            </div>
            <div className="h-[17px] shrink-0 flex border-t border-[#b00000] text-[14px] text-[#c0c0c0]">
                {tabs.map((t, i) => (
                    <span key={t} className={`${i === 7 ? 'flex-1' : 'w-[28px] border-r border-[#b00000]'} ${i === 0 ? 'text-[#54ffff]' : ''} flex items-center justify-center leading-none`}>{t}</span>
                ))}
            </div>
        </div>
    );
}

function Mini({ r1, w1, w2 }: { r1: number; w1: number; w2: number }) {
    return (
        <svg width="50" height="17" viewBox="0 0 50 17" className="shrink-0">
            <rect x=".5" y=".5" width="49" height="7" fill="#f6f6f6" stroke="#dddddd" />
            <rect x={r1} y="1" width={w1} height="6" fill="#e00000" />
            <rect x={r1 + w1} y="1" width={w2} height="6" fill="#008000" />
            {[1, 9, 17, 25, 33, 41].map((x) => (
                <g key={x} fill="#008000">
                    <rect x={x} y="10" width="6" height="2" />
                    <rect x={x} y="14" width="6" height="2" />
                </g>
            ))}
        </svg>
    );
}

function StatusBar() {
    return (
        <div className="h-[23px] shrink-0 flex items-center bg-[#f0f0f0] text-[12px] text-black border-t border-[#d0d0d0]">
            {statusItems.map(([t, c], i) => (
                <span key={i} className={c}>{t}</span>
            ))}
            <Mini r1={11} w1={12} w2={12} />
            <span className="w-[3px]" />
            <Mini r1={16} w1={7} w2={7} />
            <span className="ml-[3px] h-full border-l border-[#a0a0a0] pl-[5px] leading-[22px]">广州行情主站1</span>
            <div className="ml-auto flex items-center gap-[6px] pr-[8px]">
                <svg width="15" height="13" viewBox="0 0 15 13"><rect x=".5" y=".5" width="14" height="12" fill="#fff" stroke="#555" /><path d="M2 3.5 H13 M2 6.5 H13 M2 9.5 H13" stroke="#999" /></svg>
                <svg width="13" height="13" viewBox="0 0 13 13"><rect width="13" height="13" rx="4" fill="#d8c820" stroke="#555" /><path d="M6.5 2 L9.5 6 H7.5 V10 H5.5 V6 H3.5 Z" fill="#333" /></svg>
                <svg width="12" height="15" viewBox="0 0 12 15"><path d="M6 4 V14 M2 14 H10 M3 9 H9 M2 1 V6 M10 1 V6" stroke="#808040" fill="none" /></svg>
                <svg width="9" height="13" viewBox="0 0 9 13"><path d="M4.5 0 L8 4 H1 Z M4.5 3 L9 8 H0 Z M3 8 H6 V13 H3 Z" fill="#707070" /></svg>
                <svg width="3" height="10" viewBox="0 0 3 10"><path d="M0 0 H3 V6 H0 Z M0 8 H3 V10 H0 Z" fill="#707070" /></svg>
            </div>
        </div>
    );
}

function IconBox({ children }: { children: ReactNode }) {
    return (
        <svg width="17" height="16" viewBox="0 0 17 16">
            <rect x=".5" y=".5" width="16" height="15" fill="#fff" stroke="#2f7fe0" strokeWidth="1.2" />
            {children}
        </svg>
    );
}

function TextBox({ t }: { t: string }) {
    return (
        <IconBox>
            <text x="8.5" y="12" fontSize="11" fill="#1060d0" textAnchor="middle">{t}</text>
        </IconBox>
    );
}

function ToolRow({ children, className = '' }: { children: ReactNode; className?: string }) {
    return <div className={`h-[23px] flex items-center justify-center ${className}`}>{children}</div>;
}

const Sep = () => <div className="h-[8px] flex items-center px-[3px]"><div className="h-[1px] w-full bg-[#a8a8a8]" /></div>;

function Toolbar() {
    const blue = { fill: '#fff', stroke: '#2f7fe0', strokeWidth: 1.2 };
    return (
        <div className="w-[26px] shrink-0 flex flex-col bg-[#f0f0f0] text-[#003c9c] text-[13px]">
            <ToolRow className="-mt-[2px]"><svg width="20" height="14" viewBox="0 0 20 14"><polygon points="1,7 8,1 8,4 19,4 19,10 8,10 8,13" {...blue} /></svg></ToolRow>
            <ToolRow><svg width="14" height="18" viewBox="0 0 14 18"><polygon points="7,1 13,8 10,8 10,17 4,17 4,8 1,8" {...blue} /></svg></ToolRow>
            <ToolRow><svg width="14" height="18" viewBox="0 0 14 18"><polygon points="7,17 13,10 10,10 10,1 4,1 4,10 1,10" {...blue} /></svg></ToolRow>
            <ToolRow>
                <IconBox>
                    <path d="M2 3 H7 M2 6 H7" stroke="#2a9a2a" /><path d="M2 9 H7" stroke="#e03030" /><path d="M9 3 H14" stroke="#e03030" /><path d="M9 6 H14" stroke="#2a9a2a" />
                    <circle cx="12" cy="11" r="3.5" fill="#d8d8d8" stroke="#707070" />
                </IconBox>
            </ToolRow>
            <ToolRow>
                <IconBox>
                    <path d="M2.5 3 V13 M2.5 3 M6.5 3 V13" stroke="#e03030" strokeWidth="2" strokeDasharray="1 1" />
                    <path d="M10.5 3 V13" stroke="#2040c0" strokeWidth="2" strokeDasharray="1 1" />
                    <path d="M14 3 V13" stroke="#2a9a2a" strokeWidth="2" strokeDasharray="1 1" />
                </IconBox>
            </ToolRow>
            <ToolRow><IconBox><polyline points="2,12 6,8 9,10 14,4" fill="none" stroke="#e03030" /></IconBox></ToolRow>
            <ToolRow>
                <IconBox>
                    <path d="M4 4 V12 M9 2 V11 M13 3 V10" stroke="#303030" />
                    <rect x="2.5" y="6" width="3" height="4" fill="#e03030" /><rect x="7.5" y="5" width="3" height="4" fill="#209020" /><rect x="11.5" y="4" width="3" height="4" fill="#e03030" />
                </IconBox>
            </ToolRow>
            <ToolRow>
                <svg width="17" height="16" viewBox="0 0 17 16">
                    <rect x="4.5" y="1.5" width="12" height="10" {...blue} /><rect x=".5" y="4.5" width="13" height="11" {...blue} />
                    <path d="M3 8 H11 M3 10.5 H11 M3 13 H11" stroke="#5080c0" />
                </svg>
            </ToolRow>
            <ToolRow><TextBox t="F10" /></ToolRow>
            <ToolRow>
                <IconBox><path d="M4 4 V12 H8 M4 7 H8" stroke="#d0a000" fill="none" /><rect x="2" y="2" width="5" height="3" fill="#f0c000" /><rect x="8" y="6" width="6" height="3" fill="#f0c000" /><rect x="8" y="10" width="6" height="3" fill="#f0c000" /></IconBox>
            </ToolRow>
            <ToolRow><IconBox><rect x="3" y="2" width="11" height="12" fill="#f08030" /><path d="M5 5 H12 M5 8 H12 M5 11 H12" stroke="#fff" /></IconBox></ToolRow>
            <ToolRow><TextBox t="F12" /></ToolRow>
            <ToolRow>
                <svg width="17" height="16" viewBox="0 0 17 16">
                    <rect x=".5" y=".5" width="16" height="15" rx="4" fill="#fff" stroke="#107070" strokeWidth="1.2" />
                    <text x="8.5" y="12" fontSize="11" fontStyle="italic" fill="#1040a0" textAnchor="middle">f(x)</text>
                </svg>
            </ToolRow>
            <ToolRow><IconBox><circle cx="8.5" cy="8" r="4.5" fill="none" stroke="#1060d0" strokeWidth="1.2" /></IconBox></ToolRow>
            <Sep />
            <ToolRow>
                <IconBox>
                    <polyline points="2,7 5,4 8,7 11,4 15,7" fill="none" stroke="#e03030" />
                    <polyline points="2,11 5,8 8,11 11,8 15,11" fill="none" stroke="#2040c0" />
                </IconBox>
            </ToolRow>
            <ToolRow><span className="font-bold text-[12px] text-[#2030b0] tracking-[-0.5px]">RSI</span></ToolRow>
            <ToolRow><span className="font-bold text-[18px] leading-none text-[#d02020] [text-shadow:1px_1px_#808080]">S</span></ToolRow>
            <ToolRow>
                <svg width="20" height="18" viewBox="0 0 20 18">
                    <path d="M10 0 L13 4 H11 V8 H15 V6 L19 9 L15 12 V10 H11 V14 H13 L10 18 L7 14 H9 V10 H5 V12 L1 9 L5 6 V8 H9 V4 H7 Z" fill="#1040b0" />
                </svg>
            </ToolRow>
            <ToolRow>
                <svg width="18" height="18" viewBox="0 0 18 18">
                    <path d="M13 1 L17 5 L6 16 L1 17 L2 12 Z" fill="#e8a030" stroke="#906020" />
                    <path d="M13 1 L17 5 L15 7 L11 3 Z" fill="#e06060" />
                    <path d="M1 17 L2 12 L6 16 Z" fill="#f0d8b0" />
                </svg>
            </ToolRow>
            <Sep />
            <ToolRow><TextBox t="F5" /></ToolRow>
            <ToolRow>
                <IconBox>
                    <path d="M3 8 A5.5 5 0 0 1 12 4 L14 2 V8 H8 L10 6 A3 3 0 0 0 5 8 Z" fill="#50b050" />
                    <path d="M14 8 A5.5 5 0 0 1 5 12 L3 14 V8 H9 L7 10 A3 3 0 0 0 12 8 Z" fill="#50b050" />
                </IconBox>
            </ToolRow>
            {['1', '5', '15', '30', '60'].map((t) => (
                <ToolRow key={t}>{t}</ToolRow>
            ))}
            <ToolRow className="bg-[#f8f8f8] border border-[#b0b0b0] text-[14px]">日</ToolRow>
            {['周', '月', 'N', '多', '季', '年'].map((t) => (
                <ToolRow key={t} className="text-[14px]">{t}</ToolRow>
            ))}
        </div>
    );
}

// hand-drawn annotation circles that sit over the panes
function Annotations() {
    return (
        <svg width="1426" height="818" viewBox="0 0 1426 818" className="absolute top-0 left-0 pointer-events-none">
            <ellipse cx="1097" cy="482" rx="35" ry="26.5" fill="none" stroke={YEL} strokeWidth="3" />
            <ellipse cx="1087" cy="707" rx="45" ry="38" fill="none" stroke={YEL} strokeWidth="3" />
        </svg>
    );
}

export default function App() {
    return (
        <div className="relative w-[1426px] h-[818px] flex flex-col overflow-hidden bg-black whitespace-nowrap font-['Liberation_Sans','Noto_Sans_CJK_SC',sans-serif]">
            <TitleBar />
            <div className="flex flex-1 min-h-0">
                <div className="w-[1400px] flex flex-col">
                    <div className="flex flex-1 min-h-0">
                        <div className="w-[1171px] shrink-0 flex flex-col">
                            <PeriodRow />
                            <div className="h-[458px] shrink-0 flex">
                                <div className="relative w-[1120px]">
                                    <MainChart />
                                    <Legend />
                                    <span className="absolute left-[1063px] top-[13px] text-[9px] tracking-[4px] text-[#ff00ff]">×××</span>
                                </div>
                                <div className="flex-1 border-l border-[#b00000]">
                                    <PriceAxis />
                                </div>
                            </div>
                            <MoneyPane />
                            <AlertPane />
                            <DateAxis />
                            <TabRow items={tabsOne} h="h-[17px]" />
                            <TabRow items={tabsTwo} h="h-[18px]" />
                        </div>
                        <InfoPanel />
                    </div>
                    <StatusBar />
                </div>
                <Toolbar />
            </div>
            <Annotations />
        </div>
    );
}
